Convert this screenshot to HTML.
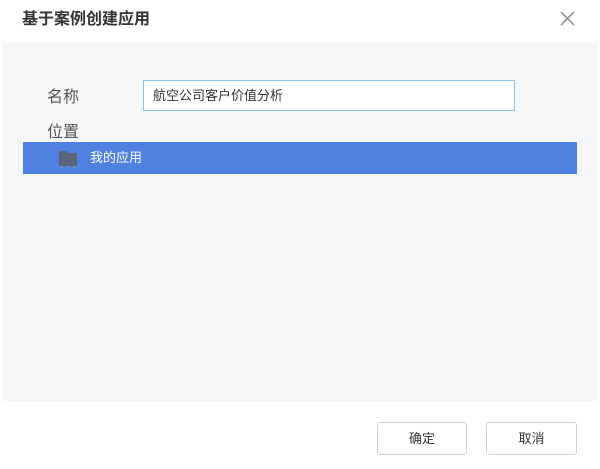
<!DOCTYPE html><html><head><style>
body{margin:0;width:600px;height:469px;background:#fff;font-family:"Liberation Sans","Noto Sans CJK SC",sans-serif;position:relative;overflow:hidden}
.a{position:absolute;line-height:1.2}
</style></head><body>
<div class="a" style="left:22px;top:10px;font-size:16px;font-weight:bold;color:#333">基于案例创建应用</div>
<svg class="a" style="left:560px;top:11px" width="15" height="15"><path d="M1 1L14 14M14 1L1 14" stroke="#888" stroke-width="1.5"/></svg>
<div class="a" style="left:2px;top:43px;width:596px;height:358px;background:#f5f6f8"></div>
<div class="a" style="left:47px;top:88px;font-size:16px;color:#555">名称</div>
<div class="a" style="left:143px;top:80px;width:370px;height:29px;background:#fff;border:1px solid #8ec2ee"></div>
<div class="a" style="left:153px;top:88px;font-size:13px;color:#333">航空公司客户价值分析</div>
<div class="a" style="left:47px;top:123px;font-size:16px;color:#555">位置</div>
<div class="a" style="left:23px;top:142px;width:554px;height:32px;background:#5080e0"></div>
<svg class="a" style="left:59px;top:150px" width="18" height="18"><path d="M0 1H7L9 3H18V16H0Z" fill="#5c6478"/><path d="M1 17H4M8 17H11M14 17H17" stroke="#8a93a6"/></svg>
<div class="a" style="left:90px;top:150px;font-size:13px;color:#fff">我的应用</div>
<div class="a" style="left:377px;top:422px;width:88px;height:31px;border:1px solid #ccd3de;border-radius:3px;text-align:center;line-height:31px;font-size:13px;color:#333">确定</div>
<div class="a" style="left:486px;top:422px;width:89px;height:31px;border:1px solid #ccd3de;border-radius:3px;text-align:center;line-height:31px;font-size:13px;color:#333">取消</div>
</body></html>
